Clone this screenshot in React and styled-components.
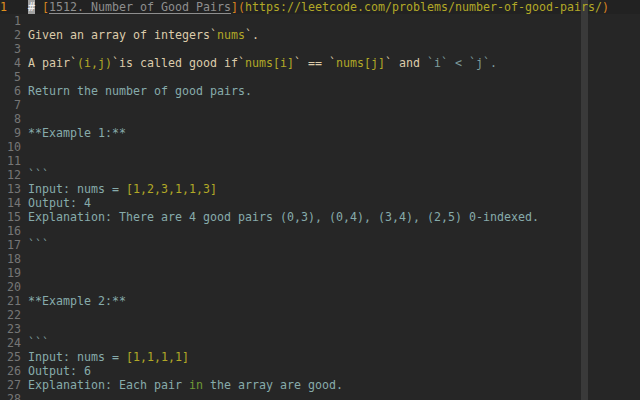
import React from "react";
import styled, { createGlobalStyle, css } from "styled-components";

const Global = createGlobalStyle`
  html, body {
    margin: 0;
    padding: 0;
    background: #262626;
  }
  body {
    width: 640px;
    height: 400px;
    overflow: hidden;
  }
`;

const COL = 7;

const Editor = styled.div`
  display: flex;
  flex-direction: column;
  width: 640px;
  height: 400px;
  overflow: hidden;
  background: #262626;
  font-family: "DejaVu Sans Mono", "Liberation Mono", monospace;
  font-size: 11.63px;
  line-height: 14px;
`;

const Row = styled.div`
  display: flex;
  height: 14px;
  flex: none;
  background: ${(p) => (p.$current ? "#222222" : "transparent")};
`;

const LineNr = styled.div`
  flex: none;
  width: ${4 * COL}px;
  box-sizing: border-box;
  padding-right: ${COL}px;
  text-align: right;
  color: #767676;
  white-space: pre;
  ${(p) =>
    p.$current &&
    css`
      text-align: left;
      padding-right: 0;
      color: #e0901e;
    `}
`;

const Text = styled.div`
  flex: 1;
  white-space: pre;
  background: linear-gradient(
    to right,
    transparent ${79 * COL}px,
    #3a3a3a ${79 * COL}px,
    #3a3a3a ${80 * COL}px,
    transparent ${80 * COL}px
  );
`;

const colors = {
  fg: "#dccbaa",
  olive: "#b2a827",
  teal: "#86abab",
  tealDim: "#7d9c9c",
  orange: "#d9821f",
  link: "#8e8e8e",
  green: "#6f9a36",
};

const Seg = styled.span`
  color: ${(p) => colors[p.$k] || colors.fg};
  ${(p) =>
    p.$k === "link" &&
    css`
      text-decoration: underline;
      text-underline-offset: 2px;
    `}
`;

const Cursor = styled.span`
  background: #a2a2a2;
  color: #f4f4f4;
`;

const lines = [
  [
    ["#", "cursor"],
    [" ", "fg"],
    ["[", "orange"],
    ["1512. Number of Good Pairs", "link"],
    ["](", "orange"],
    ["https://leetcode.com/problems/number-of-good-pairs/", "olive"],
    [")", "orange"],
  ],
  [],
  [
    ["Given an array of integers`", "fg"],
    ["nums", "olive"],
    ["`.", "fg"],
  ],
  [],
  [
    ["A pair`", "fg"],
    ["(i,j)", "olive"],
    ["`is called good if`", "fg"],
    ["nums[i]", "olive"],
    ["` == `", "fg"],
    ["nums[j]", "olive"],
    ["` and ", "fg"],
    ["`i` < `j`.", "tealDim"],
  ],
  [],
  [["Return the number of good pairs.", "teal"]],
  [],
  [],
  [["**Example 1:**", "teal"]],
  [],
  [],
  [["```", "tealDim"]],
  [
    ["Input: nums = ", "teal"],
    ["[1,2,3,1,1,3]", "olive"],
  ],
  [["Output: 4", "teal"]],
  [
    [
      "Explanation: There are 4 good pairs (0,3), (0,4), (3,4), (2,5) 0-indexed.",
      "teal",
    ],
  ],
  [],
  [["```", "tealDim"]],
  [],
  [],
  [],
  [["**Example 2:**", "teal"]],
  [],
  [],
  [["```", "tealDim"]],
  [
    ["Input: nums = ", "teal"],
    ["[1,1,1,1]", "olive"],
  ],
  [["Output: 6", "teal"]],
  [
    ["Explanation: Each pair ", "teal"],
    ["in", "green"],
    [" the array are good.", "teal"],
  ],
  [],
];

export default function App() {
  return (
    <>
      <Global />
      <Editor>
        {lines.map((segs, i) => (
          <Row key={i} $current={i === 0}>
            <LineNr $current={i === 0}>{i === 0 ? "1" : String(i)}</LineNr>
            <Text>
              {segs.map(([t, k], j) =>
                k === "cursor" ? (
                  <Cursor key={j}>{t}</Cursor>
                ) : (
                  <Seg key={j} $k={k}>
                    {t}
                  </Seg>
                )
              )}
              {segs.length === 0 ? " " : null}
            </Text>
          </Row>
        ))}
      </Editor>
    </>
  );
}
